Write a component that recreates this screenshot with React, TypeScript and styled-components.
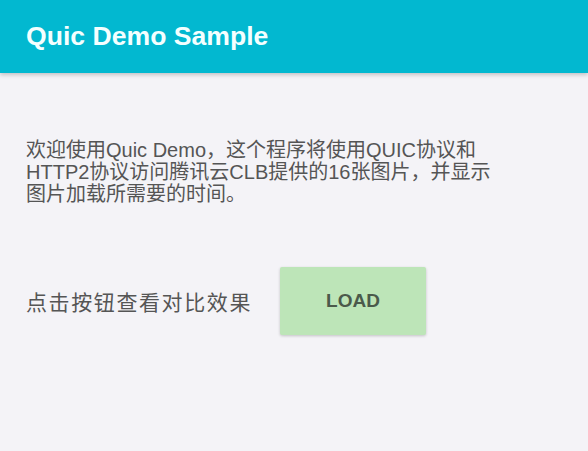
import React from "react";
import styled, { createGlobalStyle } from "styled-components";

const Global = createGlobalStyle`
  html, body { margin: 0; padding: 0; background: #f4f3f7; }
  body { font-family: "Liberation Sans", "Noto Sans CJK SC", sans-serif; }
`;

const Page = styled.div`
  width: 588px;
  height: 451px;
  display: flex;
  flex-direction: column;
  background: #f4f3f7;
  overflow: hidden;
`;

const AppBar = styled.header`
  height: 73px;
  background: #02b8d0;
  display: flex;
  align-items: center;
  padding-left: 26px;
  box-shadow: 0 2px 4px rgba(0, 0, 0, 0.2);
  flex-shrink: 0;
`;

const Title = styled.h1`
  margin: -1px 0 0 0;
  font-family: "Liberation Sans", Arial, sans-serif;
  font-weight: 700;
  font-size: 26.6px;
  color: #f4ffff;
`;

const Content = styled.main`
  display: flex;
  flex-direction: column;
  padding: 66px 26px 0 26px;
`;

const Intro = styled.p`
  margin: 0;
  width: 470px;
  font-size: 20px;
  line-height: 22px;
  color: #555555;
  font-family: "Liberation Sans", "Noto Sans CJK SC", sans-serif;
`;

const ActionRow = styled.div`
  display: flex;
  align-items: center;
  margin-top: 62px;
`;

const Hint = styled.span`
  font-size: 21px;
  letter-spacing: 1.6px;
  color: #555555;
  width: 254px;
  font-family: "Liberation Sans", "Noto Sans CJK SC", sans-serif;
`;

const LoadButton = styled.button`
  width: 146px;
  height: 68px;
  border: none;
  border-radius: 2px;
  background: #bde5b8;
  box-shadow: 0 1px 3px rgba(0, 0, 0, 0.2);
  color: #4b5a4b;
  font-family: "Liberation Sans", Arial, sans-serif;
  font-weight: 700;
  font-size: 19px;
  cursor: pointer;
`;

export default function App() {
  return (
    <>
      <Global />
      <Page>
        <AppBar>
          <Title>Quic Demo Sample</Title>
        </AppBar>
        <Content>
          <Intro>
            欢迎使用Quic Demo，这个程序将使用QUIC协议和HTTP2协议访问腾讯云CLB提供的16张图片，并显示图片加载所需要的时间。
          </Intro>
          <ActionRow>
            <Hint>点击按钮查看对比效果</Hint>
            <LoadButton>LOAD</LoadButton>
          </ActionRow>
        </Content>
      </Page>
    </>
  );
}
